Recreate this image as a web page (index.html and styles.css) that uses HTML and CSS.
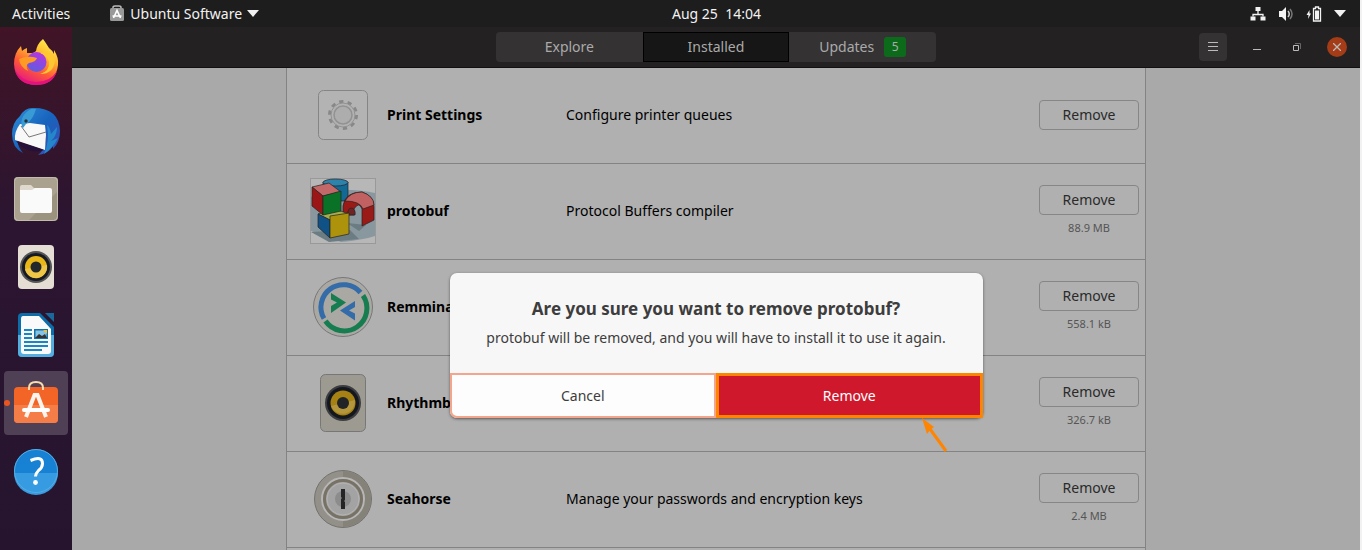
FILE: index.html
```
<!DOCTYPE html>
<html lang="en">
<head>
    <meta charset="UTF-8">
    <meta name="viewport" content="width=device-width, initial-scale=1.0">
    <title>Ubuntu Software</title>
    <link rel="stylesheet" href="styles.css">
</head>
<body>

<header class="topbar">
    <div class="topbar-left">
        <button type="button" class="top-button activities">Activities</button>
        <button type="button" class="top-button">
            <svg width="16" height="18" viewBox="0 0 16 18">
                <path d="M4 4V2.500Q4 1 6 1h4q2 0 2 1.500V4" fill="none" stroke="#bbb" stroke-width="1.500"/>
                <rect x="1" y="3" width="14" height="13" rx="1.500" fill="#999"/>
                <path d="M4.500 13L8 5.500l3.500 7.500M3.500 11h9" fill="none" stroke="#fff" stroke-width="1.600"/>
            </svg>
            Ubuntu Software
            <svg width="12" height="7" viewBox="0 0 12 7"><path d="M0 0h12L6 7z" fill="#f2f2f2"/></svg>
        </button>
    </div>
    <button type="button" class="top-button">Aug 25&nbsp; 14:04</button>
    <div class="topbar-right">
        <button type="button" class="top-button status" aria-label="System menu">
            <svg width="16" height="16" viewBox="0 0 16 16">
                <path d="M5.500 1h5v4h-5zM.5 10.500h5v4h-5zM10.500 10.500h5v4h-5z" fill="#f2f2f2"/>
                <path d="M8 5v3M3 10.500V8.500h10v2" fill="none" stroke="#f2f2f2" stroke-width="1.300"/>
            </svg>
            <svg width="16" height="16" viewBox="0 0 16 16">
                <path d="M1 5h3l4-4v14l-4-4H1z" fill="#f2f2f2"/>
                <path d="M10 5q2.500 3 0 6" fill="none" stroke="#ccc" stroke-width="1.500"/>
                <path d="M12 3q4 5 0 10" fill="none" stroke="#777" stroke-width="1.500"/>
            </svg>
            <svg width="16" height="16" viewBox="0 0 16 16">
                <path d="M3.500 4L.5 9h2l-.5 4 3-5.500H3.500z" fill="#f2f2f2"/>
                <path d="M7.500 2.500h2V1h3v1.500h2V15h-7z" fill="none" stroke="#f2f2f2" stroke-width="1.300"/>
                <path d="M9 4.500h4v9H9z" fill="#f2f2f2"/>
            </svg>
            <svg width="12" height="7" viewBox="0 0 12 7"><path d="M0 0h12L6 7z" fill="#f2f2f2"/></svg>
        </button>
    </div>
</header>

<div class="desktop">
    <nav class="dock" aria-label="Dock">
        <button type="button" class="dock-item" aria-label="Firefox">
            <svg width="48" height="48" viewBox="0 0 48 48">
                <defs>
                    <linearGradient id="fox" x1=".8" y1="0" x2=".3" y2="1">
                        <stop offset="0" stop-color="#fff44f"/>
                        <stop offset=".35" stop-color="#ffb52e"/>
                        <stop offset=".65" stop-color="#ff5a36"/>
                        <stop offset="1" stop-color="#e31587"/>
                    </linearGradient>
                    <linearGradient id="globe" x1=".7" y1="0" x2=".3" y2="1">
                        <stop offset="0" stop-color="#b833e1"/>
                        <stop offset="1" stop-color="#5a5fe0"/>
                    </linearGradient>
                </defs>
                <path d="M31 0q3 4 6 9 3 2 5 6l0-4q5 8 4 15-2 19-22 20Q3 45 2 25 2 14 9 7l1 5q2-2 5-3l0 5 6 0q2-1 3-2 1-7 7-12z" fill="url(#fox)"/>
                <circle cx="24.500" cy="23" r="10" fill="url(#globe)"/>
                <path d="M7 20q9-4 18-1-1 4-8 5-4 2-1 8-8-4-9-12z" fill="#ff9a24"/>
                <path d="M28 14q7 2 9 9 1 9-9 12 14 0 15-14-2-5-5-6-3-4-6-2z" fill="#ffc832"/>
                <path d="M3 31q7 12 21 12 14 0 21-11-4 14-21 14Q7 46 3 31z" fill="#e5127d"/>
            </svg>
        </button>
        <button type="button" class="dock-item" aria-label="Thunderbird">
            <svg width="48" height="48" viewBox="0 0 48 48">
                <defs>
                    <linearGradient id="bird" x1="0" y1="0" x2="1" y2="1">
                        <stop offset="0" stop-color="#2f8fd8"/>
                        <stop offset=".5" stop-color="#1763bd"/>
                        <stop offset="1" stop-color="#3d4bb4"/>
                    </linearGradient>
                </defs>
                <path d="M8 9Q13 0 22 1q25 0 26 23 0 11-7 18l0-3q-5 8-15 9 8-6 8-18-4-11-16-12l-9 5q-8 11 2 23Q0 41 0 27 0 16 8 9z" fill="url(#bird)"/>
                <path d="M9 17l9-1 15 2 1 10-1 15L3 33q-1-8 5-16z" fill="#f8f8f8"/>
                <path d="M9 19l8 11 17-5" fill="none" stroke="#777" stroke-width="1"/>
                <path d="M4 34l28 9q-4 2-12 1-10-2-16-10z" fill="#24103b"/>
                <path d="M10 20q-3-11 9-18l5 0q-3 11-10 15l-3 4z" fill="#399bd4"/>
                <path d="M35 18q3 2 4 9l6-7q0 9-6 14l7-3q-5 10-14 16 6-13 3-29z" fill="#2487cc"/>
                <circle cx="14" cy="14" r="1.700" fill="#273238"/>
            </svg>
        </button>
        <button type="button" class="dock-item" aria-label="Files">
            <svg width="48" height="48" viewBox="0 0 48 48">
                <rect x="2" y="2" width="44" height="44" rx="4" fill="#9b937d"/>
                <path d="M6 2h36q4 0 4 4v10L16 46H6q-4 0-4-4V6q0-4 4-4z" fill="#aaa28e"/>
                <rect x="2.500" y="2.500" width="43" height="43" rx="4" fill="none" stroke="#c3bcae"/>
                <path d="M8 17v-5q0-2 2-2h9l3 3h10v5z" fill="#ded9cc"/>
                <path d="M8 15h12l3-2h15q2 0 2 2v21q0 2-2 2H10q-2 0-2-2z" fill="#fafafa"/>
            </svg>
        </button>
        <button type="button" class="dock-item" aria-label="Rhythmbox">
            <svg width="48" height="48" viewBox="0 0 48 48">
                <rect x="6" y="2" width="36" height="44" rx="4" fill="#e4ded4"/>
                <circle cx="24" cy="24" r="16" fill="#555"/>
                <circle cx="24" cy="24" r="14" fill="#171a24"/>
                <circle cx="24" cy="24" r="11" fill="#e9b717"/>
                <path d="M13 26a11 11 0 0 0 22-4z" fill="#efc548"/>
                <circle cx="24" cy="24" r="5.500" fill="#22282c"/>
            </svg>
        </button>
        <button type="button" class="dock-item" aria-label="LibreOffice Writer">
            <svg width="48" height="48" viewBox="0 0 48 48">
                <path d="M10 2h18l14 14v26q0 4-4 4H10q-4 0-4-4V6q0-4 4-4z" fill="#0d6da8"/>
                <path d="M6 24h36v18q0 4-4 4H10q-4 0-4-4z" fill="#54afe0"/>
                <path d="M33 2h9v9z" fill="#176a9b"/>
                <path d="M11 5h16l12 13v22q0 3-3 3H12q-3 0-3-3V8q0-3 2-3z" fill="#fafafa"/>
                <path d="M12 19h8M12 23h8M12 27h8M12 31h24M12 35h24M12 39h18" stroke="#1688c8" stroke-width="2"/>
                <path d="M22 18h14v10H22z" fill="#1272a8"/>
                <path d="M23.500 19.500h11v7h-11z" fill="#84c3e8"/>
                <path d="M23 27l4-4 3 2 3-2 2 4z" fill="#333"/>
                <path d="M31 19h4v4z" fill="#f8bd35"/>
            </svg>
        </button>
        <button type="button" class="dock-item active" aria-label="Ubuntu Software">
            <svg width="48" height="48" viewBox="0 0 48 48">
                <rect x="2" y="8" width="44" height="36" rx="4" fill="#f26526"/>
                <path d="M2 26h44v14q0 4-4 4H6q-4 0-4-4z" fill="#f47d48"/>
                <path d="M17 11V9q0-6 7-6t7 6v2" fill="none" stroke="#f8dcae" stroke-width="2"/>
                <path d="M14 38l8.500-22h3L34 38" fill="none" stroke="#fff4ed" stroke-width="4"/>
                <path d="M12 31h24" stroke="#fff" stroke-width="4" stroke-linecap="round"/>
            </svg>
        </button>
        <button type="button" class="dock-item" aria-label="Help">
            <svg width="48" height="48" viewBox="0 0 48 48">
                <circle cx="24" cy="24" r="22" fill="#1781d3"/>
                <path d="M2 26h44a22 22 0 0 1-44 0z" fill="#369be0"/>
                <circle cx="24" cy="24" r="21.500" fill="none" stroke="#58acdf"/>
                <path d="M18.500 13.500q12-5 12 3 0 4-4 7-3 3-3 6" fill="none" stroke="#fff" stroke-width="3"/>
                <circle cx="23.500" cy="35.500" r="2.400" fill="#fff"/>
            </svg>
        </button>
    </nav>

    <main class="window">
        <div class="headerbar">
            <div></div>
            <div class="tabs">
                <button type="button" class="tab">Explore</button>
                <button type="button" class="tab selected">Installed</button>
                <button type="button" class="tab">Updates <span class="count">5</span></button>
            </div>
            <div class="window-buttons">
                <button type="button" class="menu-button" aria-label="Menu">
                    <svg width="10" height="10" viewBox="0 0 10 10"><path d="M0 .5h10M0 4.500h10M0 8.500h10" stroke="#bbb"/></svg>
                </button>
                <button type="button" class="window-button" aria-label="Minimize">
                    <svg width="8" height="8" viewBox="0 0 8 8"><path d="M0 6.500h8" stroke="#bbb"/></svg>
                </button>
                <button type="button" class="window-button" aria-label="Restore">
                    <svg width="8" height="8" viewBox="0 0 8 8"><path d="M.5 2.500h5v5h-5z" fill="none" stroke="#bbb"/><path d="M2 .5h5.500V6" fill="none" stroke="#666"/></svg>
                </button>
                <button type="button" class="window-button close" aria-label="Close">
                    <svg width="8" height="8" viewBox="0 0 8 8"><path d="M0 0l8 8M8 0L0 8" stroke="#bbb" stroke-width="1.300"/></svg>
                </button>
            </div>
        </div>

        <ul class="app-list">
            <li class="app-row">
                <svg class="app-icon" width="66" height="66" viewBox="0 0 66 66">
                    <rect x="8.500" y="8.500" width="49" height="49" rx="5" fill="#b3b3b3" stroke="#858585"/>
                    <circle cx="33" cy="33" r="13.500" fill="none" stroke="#888" stroke-width="3" stroke-dasharray="4.240 4.240"/>
                    <circle cx="33" cy="33" r="12" fill="#b2b2b2" stroke="#929292"/>
                    <circle cx="33" cy="33" r="9" fill="#adadad" stroke="#929292" stroke-width="1.500"/>
                </svg>
                <span class="app-name">Print Settings</span>
                <span class="app-summary">Configure printer queues</span>
                <div class="app-action"><button type="button" class="remove-button">Remove</button></div>
            </li>
            <li class="app-row">
                <svg class="app-icon" width="66" height="66" viewBox="0 0 66 66">
                    <rect x=".5" y=".5" width="65" height="65" fill="#b7b7b7" stroke="#999"/>
                    <path d="M1 19Q22 7 65 15v43q-13 4-34 6L1 53z" fill="#89979e"/>
                    <path d="M1 54l18 10 30-3-9-9zM37 45l12 8 7-6z" fill="#6c7c83"/>
                    <g stroke="#222" stroke-width=".7" stroke-linejoin="round">
                        <path d="M13 4v19h25V4z" fill="#126994"/>
                        <ellipse cx="25.500" cy="4.500" rx="12.500" ry="3.500" fill="#2d83ab"/>
                        <path d="M33 28Q35 14 52 14q12 4 12 15v13l-12 6V31q-3-8-8 0v6H33z" fill="#991a17"/>
                        <path d="M35 23q5-9 17-9 12 4 12 13l-11 4q-3-8-18-8z" fill="#c26161"/>
                        <path d="M38 37q-1-7 4-7 4 2 3 7z" fill="#702323"/>
                        <path d="M8 36l17-5 14 5-19 6z" fill="#a1ae4b"/>
                        <path d="M8 36l12 6v18L8 49z" fill="#105286"/>
                        <path d="M20 38l19-3v21l-19 4z" fill="#ad920b"/>
                        <path d="M2 9l17-4 12 9-18 4z" fill="#c36868"/>
                        <path d="M2 9l11 9v19L2 28z" fill="#9b1717"/>
                        <path d="M13 18l18-5v20l-18 4z" fill="#0a7227"/>
                    </g>
                </svg>
                <span class="app-name">protobuf</span>
                <span class="app-summary">Protocol Buffers compiler</span>
                <div class="app-action"><button type="button" class="remove-button">Remove</button><span class="size">88.9 MB</span></div>
            </li>
            <li class="app-row">
                <svg class="app-icon" width="66" height="66" viewBox="0 0 66 66">
                    <circle cx="33" cy="33" r="29.500" fill="#aaa8a2" stroke="#777"/>
                    <path d="M14 44.500A22.500 22.500 0 0 1 50.500 18.500" fill="none" stroke="#336ca8" stroke-width="5"/>
                    <path d="M53 21.500A22.500 22.500 0 0 1 15.500 47" fill="none" stroke="#167d51" stroke-width="5"/>
                    <path d="M21 19l15 9.500L21 39v-7l6-3.500-6-3z" fill="#167d51"/>
                    <path d="M45 27L30 36.500l15 10v-7l-6-3 6-3.500z" fill="#336ca8"/>
                </svg>
                <span class="app-name">Remmina</span>
                <span class="app-summary"></span>
                <div class="app-action"><button type="button" class="remove-button">Remove</button><span class="size">558.1 kB</span></div>
            </li>
            <li class="app-row">
                <svg class="app-icon" width="66" height="66" viewBox="0 0 66 66">
                    <rect x="10.500" y="4.500" width="45" height="57" rx="5" fill="#9d9a92" stroke="#777"/>
                    <circle cx="33" cy="33" r="18" fill="#3c3d40"/>
                    <circle cx="33" cy="33" r="16" fill="#15171f"/>
                    <circle cx="33" cy="33" r="12.500" fill="#a68214"/>
                    <path d="M21 36a12.500 12.500 0 0 0 24-6z" fill="#b4963d"/>
                    <circle cx="33" cy="33" r="6" fill="#202426"/>
                </svg>
                <span class="app-name">Rhythmbox</span>
                <span class="app-summary"></span>
                <div class="app-action"><button type="button" class="remove-button">Remove</button><span class="size">326.7 kB</span></div>
            </li>
            <li class="app-row">
                <svg class="app-icon" width="66" height="66" viewBox="0 0 66 66">
                    <circle cx="33" cy="33" r="28.500" fill="#929088" stroke="#74726c"/>
                    <path d="M33 5a28 28 0 0 1 0 56z" fill="#858279"/>
                    <circle cx="33" cy="33" r="21" fill="#a8a7a3" stroke="#b7b7b7" stroke-width="2"/>
                    <circle cx="33" cy="33" r="18.500" fill="#a3a3a3" stroke="#777265" stroke-width="3"/>
                    <circle cx="33" cy="33" r="16" fill="none" stroke="#b4b4b4"/>
                    <circle cx="33" cy="33" r="8" fill="#8c8c8c"/>
                    <path d="M31 23h4v11l-1 1 1 1v7h-4V33l1-1-1-1z" fill="#252525"/>
                </svg>
                <span class="app-name">Seahorse</span>
                <span class="app-summary">Manage your passwords and encryption keys</span>
                <div class="app-action"><button type="button" class="remove-button">Remove</button><span class="size">2.4 MB</span></div>
            </li>
            <li class="app-row"></li>
        </ul>

        <div class="dialog" role="dialog" aria-labelledby="dialogTitle">
            <div class="dialog-text">
                <h2 id="dialogTitle">Are you sure you want to remove protobuf?</h2>
                <p>protobuf will be removed, and you will have to install it to use it again.</p>
            </div>
            <div class="dialog-buttons">
                <button type="button" class="cancel">Cancel</button>
                <button type="button" class="confirm">Remove</button>
            </div>
            <svg class="arrow" width="28" height="34" viewBox="0 0 28 34">
                <path d="M25 33L9 11" stroke="#ff8400" stroke-width="3"/>
                <path d="M1 0l12 9-4 3-3 4z" fill="#ff8400"/>
            </svg>
        </div>
    </main>
</div>

</body>
</html>
```
FILE: styles.css
```
* {
    box-sizing: border-box;
}

body {
    margin: 0;
    height: 100vh;
    display: flex;
    flex-direction: column;
    overflow: hidden;
    font-family: "Noto Sans", "Open Sans", sans-serif;
    font-size: 14px;
    line-height: 20px;
    background-color: #f2f2f2;
}

button {
    font: inherit;
    color: inherit;
    border: none;
    padding: 0;
    background: none;
    cursor: pointer;
}

svg {
    display: block;
    flex: none;
}

/* Top panel */
.topbar {
    display: grid;
    /* the clock is centered over the window, not the whole screen */
    grid-template-columns: calc(50% - 7px) auto 1fr;
    align-items: center;
    flex: none;
    height: 27px;
    padding: 0 14px 0 12px;
    margin-right: 2px;
    background-color: #1d1d1d;
    color: #f2f2f2;
}

.topbar-left {
    display: flex;
    gap: 39px;
}

.top-button {
    display: flex;
    align-items: center;
    gap: 5px;
}

.topbar-right {
    display: flex;
    justify-content: flex-end;
}

.status {
    gap: 12px;
}

.desktop {
    display: flex;
    flex: 1;
    min-height: 0;
}

/* Dock */
.dock {
    display: flex;
    flex-direction: column;
    gap: 4px;
    flex: none;
    width: 72px;
    padding: 4px;
    background: linear-gradient(#411426, #2c1530 35%, #26142e);
}

.dock-item {
    position: relative;
    display: flex;
    align-items: center;
    justify-content: center;
    flex: none;
    width: 64px;
    height: 64px;
    border-radius: 4px;
}

.dock-item.active {
    background-color: #504056;
}

.dock-item.active::before {
    content: "";
    position: absolute;
    left: 0;
    top: 29px;
    width: 6px;
    height: 6px;
    border-radius: 50%;
    background-color: #e95420;
}

/* Software window */
.window {
    position: relative;
    display: flex;
    flex-direction: column;
    flex: 1;
    min-width: 0;
    margin-right: 2px;
    background-color: #a9a9a9;
}

.headerbar {
    display: grid;
    grid-template-columns: 1fr auto 1fr;
    align-items: center;
    flex: none;
    height: 41px;
    padding: 0 13px;
    background-color: #242122;
    border-bottom: 1px solid #111;
    color: #aaa;
}

.tabs {
    display: grid;
    grid-template-columns: repeat(3, 1fr);
    width: 440px;
    height: 30px;
}

.tab {
    display: flex;
    align-items: center;
    justify-content: center;
    gap: 10px;
    background-color: #343233;
}

.tab:first-child {
    border-radius: 4px 0 0 4px;
}

.tab:last-child {
    border-radius: 0 4px 4px 0;
}

.tab.selected {
    background-color: #161616;
    border: 1px solid #000;
}

.count {
    width: 22px;
    border-radius: 3px;
    background-color: #0c6b1a;
    font-size: 12px;
}

.window-buttons {
    display: flex;
    align-items: center;
    justify-content: flex-end;
    gap: 20px;
}

.menu-button,
.window-button {
    display: flex;
    align-items: center;
    justify-content: center;
}

.menu-button {
    width: 28px;
    height: 28px;
    border-radius: 4px;
    background-color: #343233;
}

.window-button {
    width: 20px;
    height: 20px;
    border-radius: 50%;
}

.window-button.close {
    background-color: #a33c17;
}

/* Installed applications */
.app-list {
    list-style: none;
    flex: 1;
    min-height: 0;
    overflow: hidden;
    width: 860px;
    max-width: 100%;
    margin: 0 auto;
    padding: 0;
    border: solid #838383;
    border-width: 0 1px;
    background-color: #b0b0b0;
}

.app-row {
    display: grid;
    grid-template-columns: 66px 168px 1fr 100px;
    column-gap: 11px;
    align-items: center;
    height: 96px;
    padding: 0 6px 2px 23px;
    border-bottom: 1px solid #838383;
    color: #000;
}

.app-name {
    font-weight: bold;
}

.app-action {
    display: flex;
    flex-direction: column;
    align-items: center;
    gap: 5px;
}

.remove-button {
    width: 100px;
    height: 30px;
    border: 1px solid #868686;
    border-radius: 4px;
    color: #2a2a2a;
}

.size {
    font-size: 11px;
    line-height: 16px;
    color: #555;
}

/* Confirmation dialog */
.dialog {
    position: absolute;
    top: 246px;
    left: 0;
    right: 0;
    width: 533px;
    margin: 0 auto;
    border-radius: 7px;
    background-color: #f7f7f7;
    box-shadow: 0 1px 3px rgba(0, 0, 0, 0.5);
    color: #3d3d3d;
    text-align: center;
}

.dialog-text {
    padding: 24px 16px 25px;
}

.dialog h2 {
    margin: 0 0 7px;
    font-size: 17px;
    line-height: 24px;
}

.dialog p {
    margin: 0;
}

.dialog-buttons {
    display: grid;
    grid-template-columns: 1fr 1fr;
    height: 45px;
}

.cancel {
    border: 2px solid #f3a68c;
    border-radius: 0 0 0 7px;
    background-color: #fdfdfd;
}

.confirm {
    border: 3px solid #ff8400;
    background-color: #d0182d;
    color: #fff;
}

.arrow {
    position: absolute;
    top: 100%;
    right: 34px;
}
```
